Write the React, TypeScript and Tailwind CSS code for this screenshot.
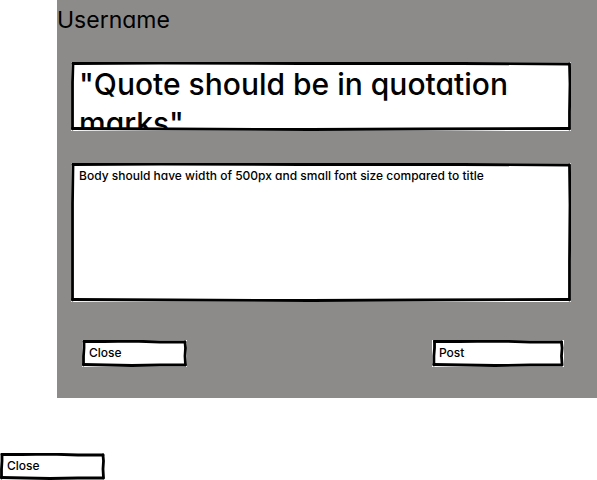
import type { ReactNode } from "react";

type Outline = { box: string; edges: string[] };

const wide: Outline = {
  box: "0 0 500 69",
  edges: [
    "M2 1.5 L90 1 L230 1.5 L390 1.5 L498 2",
    "M498.5 2 L499 22 L498.5 50 L498.5 67",
    "M498 66.5 L350 67 L240 67.5 L100 67 L1.5 66.5",
    "M1.5 67 L1.5 40 L1.5 20 L2 1",
  ],
};

const tall: Outline = {
  box: "0 0 500 139",
  edges: [
    "M2 1.5 L90 1 L230 1.5 L390 1.5 L498 2",
    "M498.5 2 L499 42 L498.5 98 L498.5 137",
    "M498 136.5 L350 137 L240 137.5 L100 137 L1.5 136.5",
    "M1.5 137 L1.5 80 L1.5 40 L2 1",
  ],
};

const small: Outline = {
  box: "0 0 105 27",
  edges: [
    "M2 1.5 L22 1.5 L50 1 L78 2 L103 2",
    "M103 2 L103.5 8 L103 16 L103.5 25",
    "M103 25 L78 25 L50 25.5 L25 25 L1.5 24.5",
    "M1.5 25 L1.5 16 L2 8 L2 1",
  ],
};

function Sketch({
  outline,
  className,
  children,
}: {
  outline: Outline;
  className: string;
  children: ReactNode;
}) {
  return (
    <div className={`relative bg-white ${className}`}>
      {children}
      <svg
        className="pointer-events-none absolute inset-0 h-full w-full"
        viewBox={outline.box}
        preserveAspectRatio="none"
        fill="none"
        stroke="black"
        strokeWidth="2.8"
        strokeLinecap="round"
        strokeLinejoin="round"
        aria-hidden="true"
      >
        {outline.edges.map((d) => (
          <path key={d} d={d} vectorEffect="non-scaling-stroke" />
        ))}
      </svg>
    </div>
  );
}

function SketchButton({ label, className }: { label: string; className: string }) {
  return (
    <Sketch outline={small} className={`h-[27px] ${className}`}>
      <button type="button" className="block h-full w-full px-[7px] pb-0.5 text-left text-[12px] leading-5 font-medium">
        {label}
      </button>
    </Sketch>
  );
}

export default function App() {
  return (
    <div className="bg-white font-['Inter','Lato',sans-serif] text-black [font-feature-settings:'cv11']">
      <main className="ml-[57px] bg-[#8d8b89] pb-[31px]">
        <h1 className="h-[62px] pt-1.5 text-[23px] leading-7">Username</h1>
        <form className="mx-3.5 max-w-[500px]">
          <Sketch outline={wide} className="h-[69px]">
            <textarea
              aria-label="Quote"
              className="block h-[66px] w-full resize-none overflow-hidden px-2 pt-[3px] text-[30px] leading-[39px] font-medium outline-none"
              defaultValue={'"Quote should be in quotation marks"'}
            />
          </Sketch>
          <Sketch outline={tall} className="mt-8 h-[139px]">
            <textarea
              aria-label="Body"
              className="block h-full w-full resize-none overflow-hidden px-2 pt-[3px] text-[12px] leading-5 font-medium outline-none"
              defaultValue="Body should have width of 500px and small font size compared to title"
            />
          </Sketch>
          <div className="mt-[38px] flex justify-between pr-[7px] pl-[11px]">
            <SketchButton label="Close" className="w-[105px]" />
            <SketchButton label="Post" className="w-[132px]" />
          </div>
        </form>
      </main>
      <div className="mt-[55px]">
        <SketchButton label="Close" className="w-[105px]" />
      </div>
    </div>
  );
}
